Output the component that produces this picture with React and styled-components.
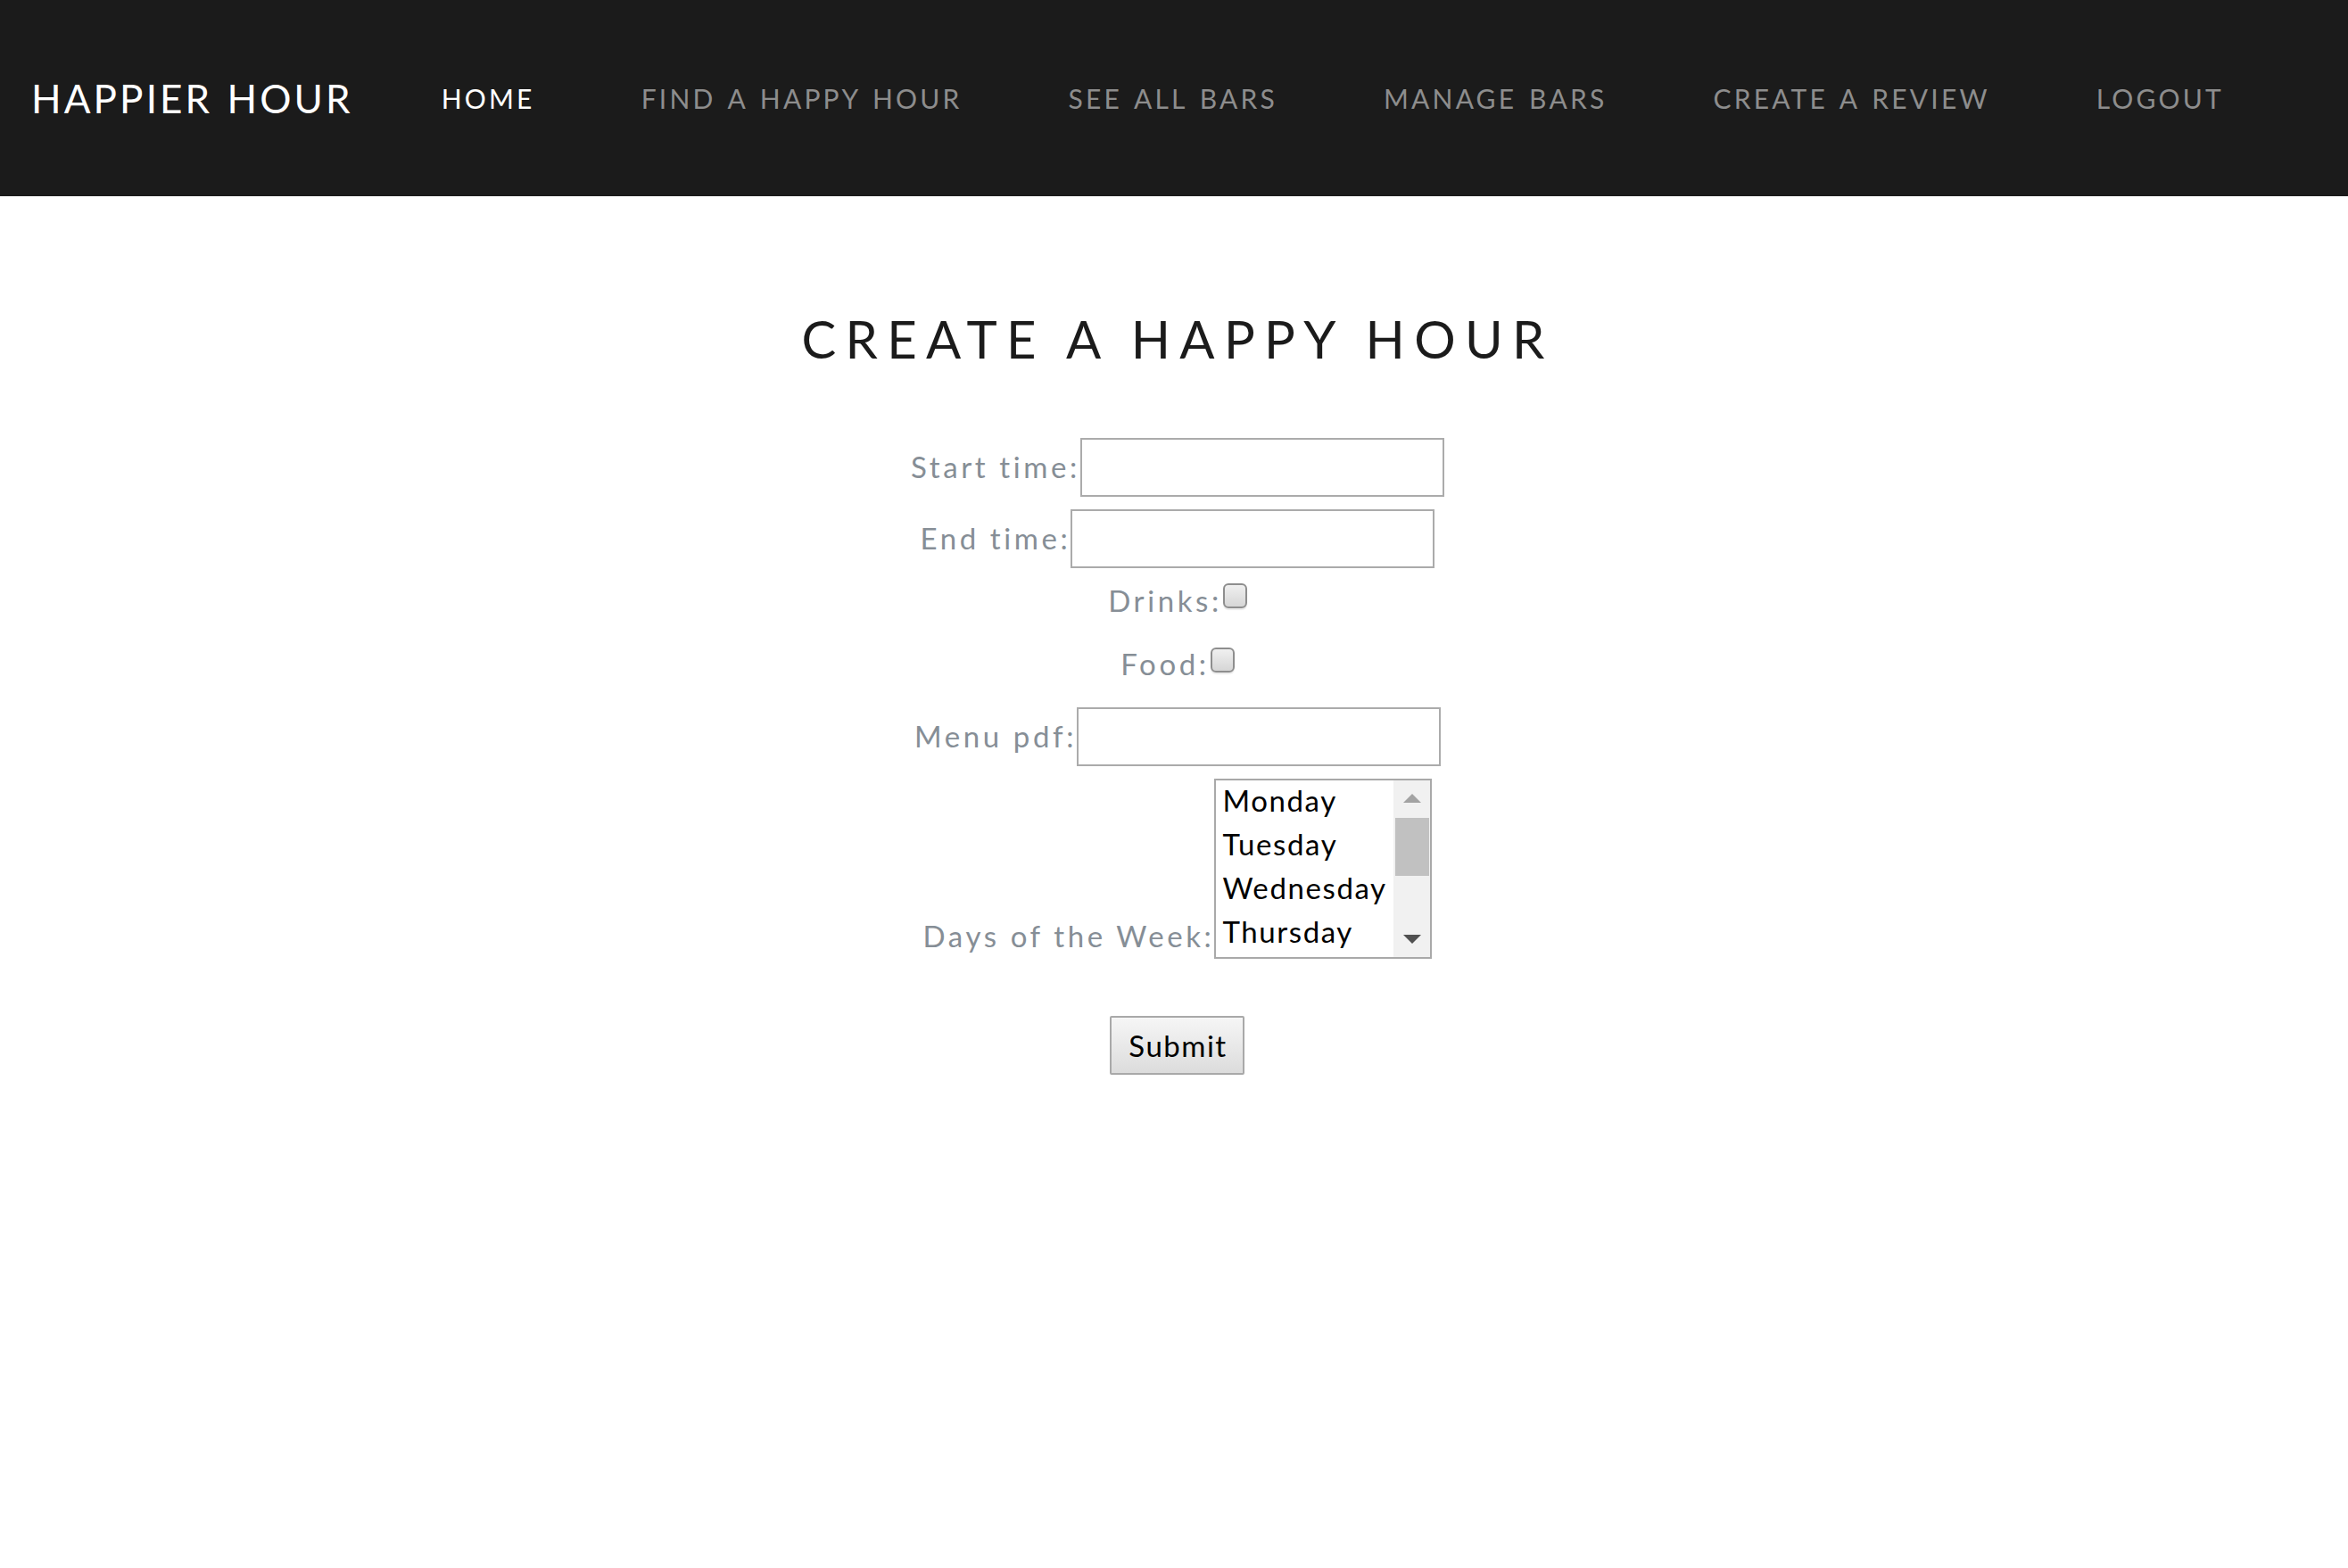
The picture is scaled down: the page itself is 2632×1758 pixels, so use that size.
import React from "react";
import styled, { createGlobalStyle } from "styled-components";

const GlobalStyle = createGlobalStyle`
  html, body { margin: 0; padding: 0; background: #ffffff; }
  body { font-family: "Lato", "Noto Sans", sans-serif; }
  * { box-sizing: border-box; }
`;

const Nav = styled.nav`
  height: 220px;
  background: #1b1b1b;
  display: flex;
  align-items: center;
  padding-left: 35px;
`;

const Brand = styled.a`
  font-size: 44px;
  line-height: 1.2;
  color: #ffffff;
  letter-spacing: 3.1px;
  word-spacing: 2px;
  text-transform: uppercase;
  margin-right: 99px;
  text-decoration: none;
`;

const NavList = styled.ul`
  display: flex;
  gap: 119px;
  list-style: none;
  margin: 0;
  padding: 0;
`;

const NavLink = styled.a`
  font-size: 30px;
  line-height: 1.2;
  letter-spacing: 3.2px;
  word-spacing: 3px;
  text-transform: uppercase;
  text-decoration: none;
  color: ${(p) => (p.$active ? "#ffffff" : "#8d8d8d")};
`;

const Main = styled.main`
  padding-left: 8px;
  display: flex;
  flex-direction: column;
  align-items: center;
`;

const Title = styled.h1`
  margin: 125px 0 0;
  font-size: 58px;
  line-height: 1.2;
  font-weight: 400;
  letter-spacing: 10.3px;
  color: #1b1b1b;
  text-transform: uppercase;
`;

const Form = styled.form`
  display: flex;
  flex-direction: column;
  align-items: center;
`;

const Row = styled.div`
  display: flex;
  justify-content: center;
  align-items: ${(p) => p.$align || "center"};
  margin-top: ${(p) => p.$mt}px;
`;

const Label = styled.label`
  font-size: 33px;
  line-height: 1.2;
  letter-spacing: 3.6px;
  color: #868e96;
  margin-bottom: ${(p) => p.$mb || 0}px;
`;

const TextInput = styled.input`
  width: 408px;
  height: 66px;
  border: 2px solid #ababab;
  background: #ffffff;
  margin: 0;
  padding: 0 6px;
  font-size: 33px;
  font-family: inherit;
`;

const Check = styled.input`
  appearance: none;
  -webkit-appearance: none;
  width: 27px;
  height: 28px;
  margin: 0 0 11px 1px;
  border: 2px solid #8e8e8e;
  border-radius: 6px;
  background: linear-gradient(#f0f0f0, #d6d6d6);
  box-shadow: 0 2px 1px rgba(0, 0, 0, 0.08);
`;

const ListBox = styled.div`
  width: 244px;
  height: 202px;
  border: 2px solid #a9a9a9;
  display: flex;
  background: #ffffff;
`;

const Options = styled.div`
  flex: 1;
  overflow: hidden;
  text-align: left;
`;

const Option = styled.div`
  font-size: 33px;
  line-height: 49px;
  height: 49px;
  padding-left: 7px;
  letter-spacing: 1.6px;
  color: #000000;
  white-space: nowrap;
  margin-top: ${(p) => (p.$first ? -2 : 0)}px;
`;

const ScrollBar = styled.div`
  width: 41px;
  flex: none;
  background: #f1f1f1;
  display: flex;
  flex-direction: column;
  align-items: center;
`;

const ArrowButton = styled.div`
  height: 40px;
  width: 100%;
  display: flex;
  align-items: center;
  justify-content: center;
`;

const Arrow = styled.span`
  width: 0;
  height: 0;
  border-left: 10px solid transparent;
  border-right: 10px solid transparent;
  ${(p) =>
    p.$down
      ? `border-top: 10px solid ${p.$color};`
      : `border-bottom: 10px solid ${p.$color};`}
`;

const Thumb = styled.div`
  width: 38px;
  height: 65px;
  margin-top: 2px;
  background: #c1c1c1;
`;

const Spacer = styled.div`
  flex: 1;
`;

const SubmitButton = styled.button`
  width: 151px;
  height: 66px;
  font-family: inherit;
  font-size: 33px;
  letter-spacing: 1.5px;
  color: #000000;
  border: 2px solid #a9a9a9;
  border-radius: 2px;
  background: linear-gradient(#f6f6f6, #dcdcdc);
  padding: 0 0 0 1px;
`;

const links = [
  { label: "Home", active: true },
  { label: "Find a Happy Hour" },
  { label: "See All Bars" },
  { label: "Manage Bars" },
  { label: "Create a Review" },
  { label: "Logout" },
];

const days = ["Monday", "Tuesday", "Wednesday", "Thursday", "Friday", "Saturday", "Sunday"];

export default function App() {
  return (
    <>
      <GlobalStyle />
      <Nav>
        <Brand href="#">Happier Hour</Brand>
        <NavList>
          {links.map((l) => (
            <li key={l.label}>
              <NavLink href="#" $active={l.active}>
                {l.label}
              </NavLink>
            </li>
          ))}
        </NavList>
      </Nav>
      <Main>
        <Title>Create a Happy Hour</Title>
        <Form onSubmit={(e) => e.preventDefault()}>
          <Row $mt={76}>
            <Label>Start time:</Label>
            <TextInput type="text" />
          </Row>
          <Row $mt={14}>
            <Label>End time:</Label>
            <TextInput type="text" />
          </Row>
          <Row $mt={17} $align="flex-end">
            <Label>Drinks:</Label>
            <Check type="checkbox" />
          </Row>
          <Row $mt={32} $align="flex-end">
            <Label>Food:</Label>
            <Check type="checkbox" />
          </Row>
          <Row $mt={28}>
            <Label>Menu pdf:</Label>
            <TextInput type="text" />
          </Row>
          <Row $mt={14} $align="flex-end">
            <Label $mb={5}>Days of the Week:</Label>
            <ListBox role="listbox">
              <Options>
                {days.map((d, i) => (
                  <Option role="option" key={d} $first={i === 0}>
                    {d}
                  </Option>
                ))}
              </Options>
              <ScrollBar>
                <ArrowButton>
                  <Arrow $color="#a3a3a3" />
                </ArrowButton>
                <Thumb />
                <Spacer />
                <ArrowButton>
                  <Arrow $down $color="#505050" />
                </ArrowButton>
              </ScrollBar>
            </ListBox>
          </Row>
          <Row $mt={64}>
            <SubmitButton type="submit">Submit</SubmitButton>
          </Row>
        </Form>
      </Main>
    </>
  );
}
